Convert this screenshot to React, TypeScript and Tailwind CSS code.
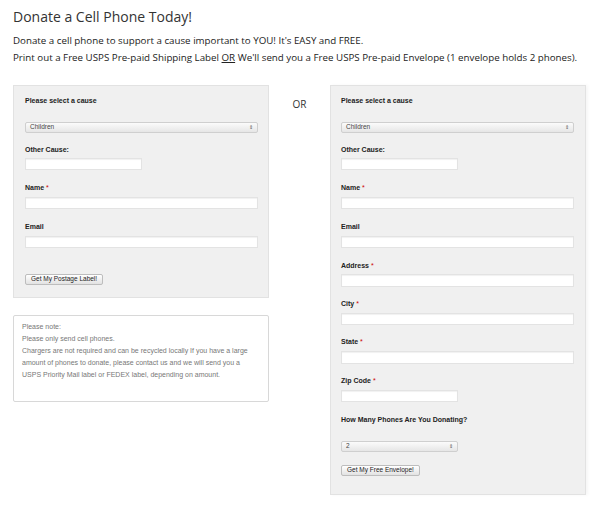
import React from 'react';

function Label({ text, req }: { text: string; req?: boolean }) {
  return (
    <div className="h-[10px] leading-[10px] text-[7px] font-bold text-[#222] font-['Liberation_Sans',Arial,sans-serif]">
      {text}
      {req && <span className="text-[#c00] font-normal"> *</span>}
    </div>
  );
}

function Field({ short, tall }: { short?: boolean; tall?: boolean }) {
  return (
    <div
      className={`${short ? 'w-[117px]' : 'w-[233px]'} ${tall ? 'h-[13px]' : 'h-[12px]'} bg-white border border-[#e3e3e3] shadow-[inset_0_1px_1px_rgba(0,0,0,0.06)]`}
    />
  );
}

function Select({ value, short }: { value: string; short?: boolean }) {
  return (
    <div
      className={`${short ? 'w-[117px]' : 'w-[233px]'} h-[11px] flex items-center justify-between px-[4px] rounded-[2px] border border-[#cfcfcf] bg-gradient-to-b from-[#fbfbfb] to-[#e6e6e6] font-['Liberation_Sans',Arial,sans-serif]`}
    >
      <span className="text-[6.5px] leading-none text-[#444]">{value}</span>
      <span className="text-[5px] leading-none text-[#555]">⇕</span>
    </div>
  );
}

function Btn({ text }: { text: string }) {
  return (
    <div className="flex w-fit h-[11px] items-center px-[5px] rounded-[2px] border border-[#bdbdbd] bg-gradient-to-b from-[#ffffff] to-[#e2e2e2] text-[6.5px] leading-none text-[#222] font-['Liberation_Sans',Arial,sans-serif]">
      {text}
    </div>
  );
}

export default function App() {
  return (
    <div className="w-[600px] h-[509px] bg-white pl-[13px] pt-[6px] font-['Open_Sans',sans-serif]">
      <h1 className="text-[14px] leading-[22px] text-[#333]">Donate a Cell Phone Today!</h1>
      <div className="mt-[4px] text-[9.75px] leading-[17px] text-[#222] whitespace-nowrap">
        <p>Donate a cell phone to support a cause important to YOU! It's EASY and FREE.</p>
        <p>
          Print out a Free USPS Pre-paid Shipping Label <span className="underline">OR</span> We'll send you a Free USPS
          Pre-paid Envelope (1 envelope holds 2 phones).
        </p>
      </div>

      <div className="mt-[19px] flex items-start">
        <div className="w-[256px] flex flex-col">
          <div className="bg-[#f0f0f0] border border-[#e2e2e2] pl-[11px] pt-[10px] pb-[12px]">
            <Label text="Please select a cause" />
            <div className="mt-[16px]"><Select value="Children" /></div>
            <div className="mt-[12px]"><Label text="Other Cause:" /></div>
            <div className="mt-[3px]"><Field short /></div>
            <div className="mt-[13px]"><Label text="Name" req /></div>
            <div className="mt-[4px]"><Field /></div>
            <div className="mt-[13px]"><Label text="Email" /></div>
            <div className="mt-[4px]"><Field /></div>
            <div className="mt-[26px]"><Btn text="Get My Postage Label!" /></div>
          </div>

          <div className="mt-[17px] h-[87px] bg-white border border-[#d8d8d8] rounded-[2px] px-[8px] pt-[5px] text-[7px] leading-[12px] text-[#777] font-['Liberation_Sans',Arial,sans-serif]">
            <p>Please note:</p>
            <p>Please only send cell phones.</p>
            <p>
              Chargers are not required and can be recycled locally If you have a large amount of phones to donate,
              please contact us and we will send you a USPS Priority Mail label or FEDEX label, depending on amount.
            </p>
          </div>
        </div>

        <div className="w-[61px] pt-[13px] text-center text-[10px] leading-[12px] text-[#333]">OR</div>

        <div className="w-[256px] bg-[#f0f0f0] border border-[#e2e2e2] shadow-[2px_0_3px_rgba(0,0,0,0.04)] pl-[10px] pt-[10px] pb-[18px]">
          <Label text="Please select a cause" />
          <div className="mt-[16px]"><Select value="Children" /></div>
          <div className="mt-[12px]"><Label text="Other Cause:" /></div>
          <div className="mt-[3px]"><Field short /></div>
          <div className="mt-[13px]"><Label text="Name" req /></div>
          <div className="mt-[4px]"><Field /></div>
          <div className="mt-[13px]"><Label text="Email" /></div>
          <div className="mt-[4px]"><Field /></div>
          <div className="mt-[13px]"><Label text="Address" req /></div>
          <div className="mt-[3px]"><Field tall /></div>
          <div className="mt-[12px]"><Label text="City" req /></div>
          <div className="mt-[4px]"><Field /></div>
          <div className="mt-[12px]"><Label text="State" req /></div>
          <div className="mt-[4px]"><Field tall /></div>
          <div className="mt-[12px]"><Label text="Zip Code" req /></div>
          <div className="mt-[4px]"><Field short /></div>
          <div className="mt-[13px]"><Label text="How Many Phones Are You Donating?" /></div>
          <div className="mt-[16px]"><Select value="2" short /></div>
          <div className="mt-[13px]"><Btn text="Get My Free Envelope!" /></div>
        </div>
      </div>
    </div>
  );
}
